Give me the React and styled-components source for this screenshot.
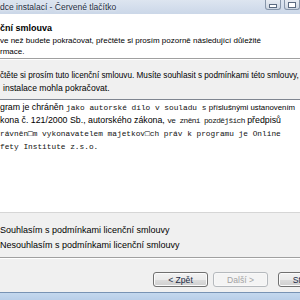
import styled, { createGlobalStyle } from "styled-components";

const Global = createGlobalStyle`
  html, body {
    margin: 0;
    padding: 0;
    background: #f0f0f0;
  }
  #root {
    width: 300px;
    height: 300px;
    overflow: hidden;
  }
`;

const Window = styled.div`
  width: 340px;
  height: 300px;
  display: flex;
  flex-direction: column;
  font-family: "Liberation Sans", Arial, sans-serif;
  font-size: 8px;
  color: #000;
  background: #f0f0f0;
`;

const TitleBar = styled.div`
  height: 14px;
  display: flex;
  align-items: flex-start;
  background: linear-gradient(to bottom, #dde5f0, #cbd7e8);
`;

const Title = styled.div`
  font-size: 8.5px;
  line-height: 14px;
  color: #1d2d42;
  text-shadow: 0 0 3px #fff;
`;

const Caption = styled.div`
  margin-left: auto;
  margin-right: 40px;
  display: flex;
  gap: 3px;
`;

const CaptionButton = styled.div`
  width: ${(p) => p.$w}px;
  height: 10px;
  box-sizing: border-box;
  border: 1px solid #8796aa;
  border-top: none;
  border-radius: 0 0 3px 3px;
  background: linear-gradient(to bottom, #e8ecf2, #cdd6e2);
  display: flex;
  align-items: center;
  justify-content: center;

  &::after {
    content: "";
    width: 6px;
    height: ${(p) => (p.$max ? 4 : 2)}px;
    margin-top: ${(p) => (p.$max ? 0 : 3)}px;
    border: 1px solid #5b6a80;
    background: #fff;
  }
`;

const Header = styled.div`
  height: 44px;
  background: #fff;
  display: flex;
`;

const HeaderText = styled.div`
  padding-top: 8px;
  flex: 1;
`;

const HeaderTitle = styled.div`
  font-weight: bold;
  font-size: 9px;
  line-height: 12px;
  margin-bottom: 1px;
`;

const Line = styled.div`
  line-height: ${(p) => p.$lh || 11}px;
  font-size: ${(p) => p.$size || 8}px;
  white-space: nowrap;
  padding-left: ${(p) => p.$indent || 0}px;
`;

const HeaderImage = styled.div`
  width: 40px;
  flex: none;
  box-sizing: border-box;
  border-left: 2px solid #1a1a1a;
  background: #fff;
`;

const Separator = styled.div`
  height: 1px;
  flex: none;
  margin-top: ${(p) => p.$mt || 0}px;
  background: #a0a0a0;
  border-bottom: 1px solid #fff;
`;

const Body = styled.div`
  padding-top: 10px;
  display: flex;
  flex-direction: column;
`;

const LicenseBox = styled.div`
  margin-top: 5px;
  height: 114px;
  box-sizing: border-box;
  background: #fff;
  border-top: 1px solid #7f8590;
  border-bottom: 1px solid #d6d6d6;
  padding-top: 1px;
  overflow: hidden;
`;

const LicenseLine = styled.div`
  line-height: 12px;
  white-space: nowrap;
  font-size: 8.8px;
`;

const Small = styled.span`
  font-size: ${(p) => p.$size}px;
`;

const Spaced = styled.span`
  font-family: "Liberation Mono", "Courier New", monospace;
  font-size: 7.8px;
  letter-spacing: ${(p) => (p.$tight ? -0.6 : 0)}px;
  color: #111;
`;

const Radios = styled.div`
  margin-top: 10px;
  display: flex;
  flex-direction: column;
`;

const Radio = styled.div`
  line-height: 15px;
  font-size: 9px;
  white-space: nowrap;
`;

const ButtonRow = styled.div`
  margin-top: 13px;
  padding-left: 153px;
  display: flex;
  gap: 5px;
`;

const Button = styled.div`
  width: 55px;
  height: 15px;
  box-sizing: border-box;
  margin-left: ${(p) => (p.$spaced ? 5 : 0)}px;
  border: 1px solid ${(p) => (p.$disabled ? "#b5b9bd" : "#707070")};
  border-radius: 3px;
  background: ${(p) =>
    p.$disabled
      ? "#f4f4f4"
      : "linear-gradient(to bottom, #f2f2f2 0%, #ebebeb 50%, #dddddd 51%, #cfcfcf 100%)"};
  color: ${(p) => (p.$disabled ? "#a3a3a3" : "#1a2a44")};
  font-size: 8.6px;
  display: flex;
  align-items: center;
  justify-content: center;
  box-shadow: inset 0 0 0 1px ${(p) => (p.$disabled ? "#f8f8f8" : "#fbfbfb")};
`;

const BottomFrame = styled.div`
  margin-top: 5px;
  flex: 1;
  border-top: 1px solid #7893b4;
  background: linear-gradient(to bottom, #c4d8ee, #b9cfe9);
`;

export default function App() {
  return (
    <>
      <Global />
      <Window>
        <TitleBar>
          <Title>dce instalací - Červené tlačítko</Title>
          <Caption>
            <CaptionButton $w={16} />
            <CaptionButton $w={16} $max />
          </Caption>
        </TitleBar>
        <Header>
          <HeaderText>
            <HeaderTitle>ční smlouva</HeaderTitle>
            <Line>ve než budete pokračovat, přečtěte si prosím pozorně následující důležité</Line>
            <Line>rmace.</Line>
          </HeaderText>
          <HeaderImage />
        </Header>
        <Separator />
        <Body>
          <Line $lh={12} $size={8.2}>
            čtěte si prosím tuto licenční smlouvu. Musíte souhlasit s podmínkami této smlouvy,
          </Line>
          <Line $lh={12} $size={8.6} $indent={3}>
            instalace mohla pokračovat.
          </Line>
          <LicenseBox>
            <LicenseLine>
              gram je chráněn <Spaced>jako autorské dílo v souladu s</Spaced>{" "}
              <Small $size={7.8}>příslušnými ustanovením</Small>
            </LicenseLine>
            <LicenseLine>
              kona č. 121/2000 Sb., autorského zákona, <Spaced $tight>ve znění pozdějších</Spaced> předpisů
            </LicenseLine>
            <LicenseLine>
              <Spaced>rávněn□m vykonavatelem majetkov□ch práv k programu je Online</Spaced>
            </LicenseLine>
            <LicenseLine>
              <Spaced>fety Institute z.s.o.</Spaced>
            </LicenseLine>
          </LicenseBox>
          <Radios>
            <Radio>Souhlasím s podmínkami licenční smlouvy</Radio>
            <Radio>Nesouhlasím s podmínkami licenční smlouvy</Radio>
          </Radios>
        </Body>
        <Separator $mt={4} />
        <ButtonRow>
          <Button>&lt; Zpět</Button>
          <Button $disabled>Další &gt;</Button>
          <Button $spaced>Storno</Button>
        </ButtonRow>
        <BottomFrame />
      </Window>
    </>
  );
}
